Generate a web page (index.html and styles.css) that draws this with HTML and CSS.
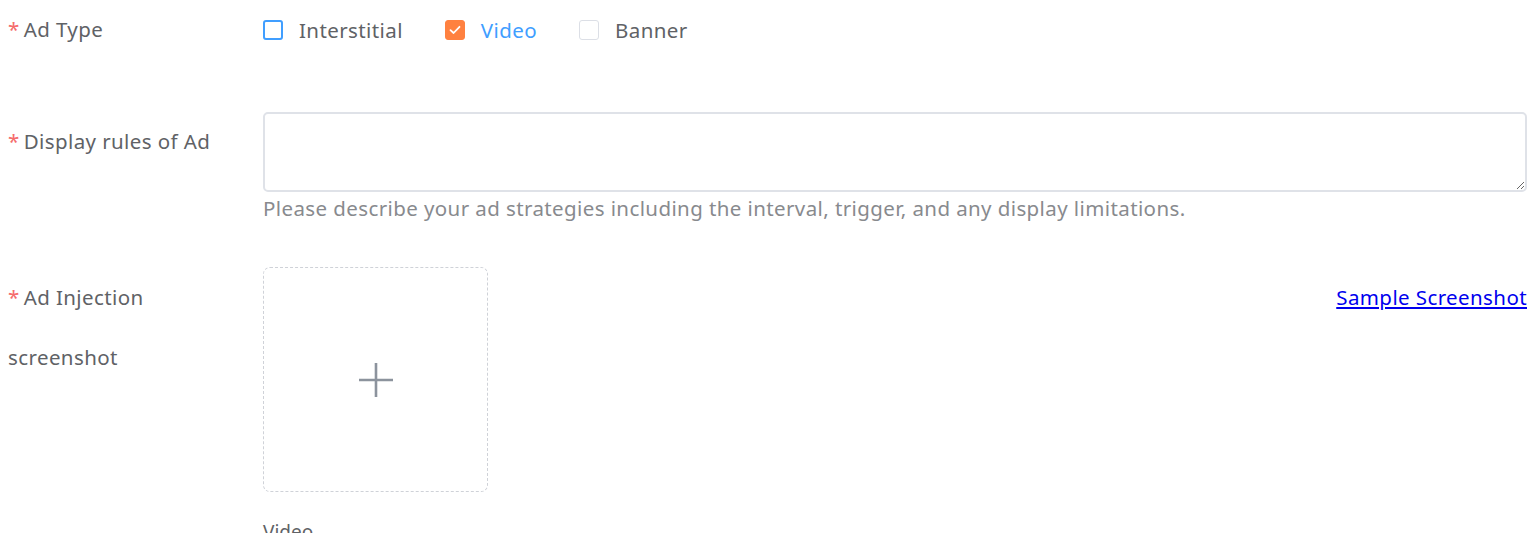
FILE: index.html
```html
<!DOCTYPE html>
<html>
<head>
<meta charset="utf-8">
<link rel="stylesheet" href="styles.css">
</head>
<body>
<form class="form">
  <div class="row row-type">
    <div class="label"><span class="req">*</span>Ad Type</div>
    <div class="content checks">
      <label class="check"><span class="box box-focus"></span><span class="check-text">Interstitial</span></label>
      <label class="check checked"><span class="box box-on"><svg width="12" height="10" viewBox="0 0 12 10"><path d="M1.5 5.2 L4.6 8 L10.5 1.8" fill="none" stroke="#fff" stroke-width="1.8" stroke-linecap="round" stroke-linejoin="round"/></svg></span><span class="check-text">Video</span></label>
      <label class="check"><span class="box box-dis"></span><span class="check-text">Banner</span></label>
    </div>
  </div>
  <div class="row row-rules">
    <div class="label"><span class="req">*</span>Display rules of Ad</div>
    <div class="content">
      <textarea class="textarea"></textarea>
      <div class="hint">Please describe your ad strategies including the interval, trigger, and any display limitations.</div>
    </div>
  </div>
  <div class="row row-shot">
    <div class="label"><span class="req">*</span>Ad Injection screenshot</div>
    <div class="content shot">
      <div class="upload-col">
        <div class="upload">
          <svg width="34" height="34" viewBox="0 0 34 34"><path d="M17 0 V34 M0 17 H34" stroke="#8c939d" stroke-width="2.6"/></svg>
        </div>
        <div class="upload-tip">Video</div>
      </div>
      <a class="sample" href="#">Sample Screenshot</a>
    </div>
  </div>
</form>
</body>
</html>
```
FILE: styles.css
```css
html, body {
  margin: 0;
  padding: 0;
  background: #fff;
}
body {
  padding: 0 8px;
  font-family: "Noto Sans", "Open Sans", sans-serif;
  font-size: 20.5px;
  letter-spacing: 0.4px;
  color: #606266;
  overflow: hidden;
  height: 533px;
}
.form {
  display: flex;
  flex-direction: column;
}
.row {
  display: flex;
  align-items: flex-start;
}
.label {
  width: 255px;
  flex: none;
  box-sizing: border-box;
  padding-right: 30px;
  line-height: 60px;
  color: #606266;
  margin-top: -1px;
}
.req {
  color: #f56c6c;
  margin-right: 4px;
}
.content {
  flex: 1;
  min-width: 0;
}
.row-type {
  height: 60px;
  margin-bottom: 52px;
}
.checks {
  display: flex;
  align-items: center;
  height: 60px;
}
.check {
  display: flex;
  align-items: center;
  margin-right: 42px;
  cursor: pointer;
}
.box {
  width: 20px;
  height: 20px;
  box-sizing: border-box;
  border-radius: 3px;
  display: flex;
  align-items: center;
  justify-content: center;
  margin-right: 16px;
}
.box-focus {
  border: 2px solid #409eff;
}
.box-on {
  background: #ff8140;
  border: 1px solid #ff8140;
}
.box-dis {
  border: 1.5px solid #dcdfe6;
  background: #fff;
}
.check-text {
  color: #606266;
}
.checked .check-text {
  color: #409eff;
}
.textarea {
  display: block;
  width: 100%;
  height: 80px;
  box-sizing: border-box;
  border: 2px solid #dfe2e8;
  border-radius: 5px;
  resize: vertical;
  font: inherit;
  margin: 0;
  padding: 6px 12px;
  outline: none;
}
.hint {
  color: #888a8e;
  line-height: 32px;
}
.row-rules {
  margin-bottom: 44px;
}
.shot {
  display: flex;
  align-items: flex-start;
}
.upload-col {
  display: flex;
  flex-direction: column;
}
.upload {
  width: 225px;
  height: 225px;
  box-sizing: border-box;
  border: 1.5px dashed #cfd2d8;
  border-radius: 7px;
  display: flex;
  align-items: center;
  justify-content: center;
  margin-top: -1px;
}
.upload-tip {
  font-size: 19px;
  letter-spacing: 0;
  margin-top: 27px;
  color: #606266;
}
.sample {
  margin-left: auto;
  line-height: 60px;
  color: #0000ee;
  text-decoration: underline;
  margin-top: -1px;
}
```
